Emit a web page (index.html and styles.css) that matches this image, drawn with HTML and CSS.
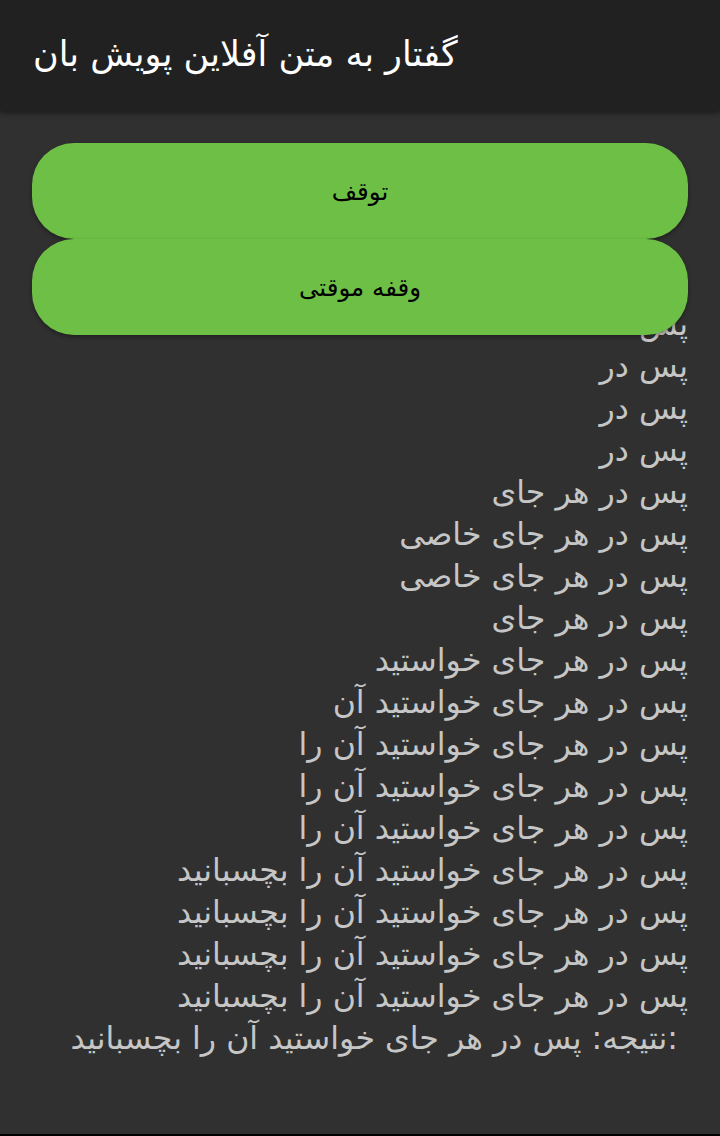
FILE: index.html
```html
<!DOCTYPE html>
<html lang="fa">
<head>
<meta charset="utf-8">
<link rel="stylesheet" href="styles.css">
</head>
<body>
<header class="toolbar">
  <h1 class="title">گفتار به متن آفلاین پویش بان</h1>
</header>
<main class="content">
  <div class="buttons">
    <button class="btn">توقف</button>
    <button class="btn">وقفه موقتی</button>
  </div>
  <div class="log">
    <p class="line">پس</p>
    <p class="line">پس در</p>
    <p class="line">پس در</p>
    <p class="line">پس در</p>
    <p class="line">پس در هر جای</p>
    <p class="line">پس در هر جای خاصی</p>
    <p class="line">پس در هر جای خاصی</p>
    <p class="line">پس در هر جای</p>
    <p class="line">پس در هر جای خواستید</p>
    <p class="line">پس در هر جای خواستید آن</p>
    <p class="line">پس در هر جای خواستید آن را</p>
    <p class="line">پس در هر جای خواستید آن را</p>
    <p class="line">پس در هر جای خواستید آن را</p>
    <p class="line">پس در هر جای خواستید آن را بچسبانید</p>
    <p class="line">پس در هر جای خواستید آن را بچسبانید</p>
    <p class="line">پس در هر جای خواستید آن را بچسبانید</p>
    <p class="line">پس در هر جای خواستید آن را بچسبانید</p>
    <p class="line result">:نتیجه: پس در هر جای خواستید آن را بچسبانید</p>
  </div>
</main>
</body>
</html>
```
FILE: styles.css
```css
html, body {
  margin: 0;
  padding: 0;
  height: 100%;
}
body {
  background: #303030;
  font-family: "DejaVu Sans", "Noto Sans", sans-serif;
  overflow: hidden;
  border-bottom: 2px solid #000;
  box-sizing: border-box;
}
.toolbar {
  height: 111px;
  background: #212121;
  box-shadow: 0 2px 5px rgba(0, 0, 0, 0.45);
  display: flex;
  align-items: center;
  padding: 0 33px;
  position: relative;
  z-index: 2;
}
.title {
  margin: 0;
  margin-top: -4px;
  font-weight: normal;
  font-size: 35px;
  color: #ffffff;
  direction: rtl;
}
.content {
  position: relative;
  padding: 0 32px;
}
.buttons {
  position: absolute;
  top: 32px;
  left: 32px;
  right: 32px;
  z-index: 1;
  display: flex;
  flex-direction: column;
}
.btn {
  height: 96px;
  border: none;
  border-radius: 42px;
  background: #6ebf45;
  color: #000;
  font-family: "DejaVu Sans", sans-serif;
  font-size: 24.5px;
  box-shadow: 0 2px 4px rgba(0, 0, 0, 0.35);
  direction: rtl;
}
.log {
  padding-top: 192px;
  direction: rtl;
}
.line {
  margin: 0;
  height: 42px;
  line-height: 42px;
  font-size: 31.6px;
  color: #c6c6c6;
  text-align: right;
  white-space: nowrap;
}
.result {
  padding-right: 10px;
}
```
